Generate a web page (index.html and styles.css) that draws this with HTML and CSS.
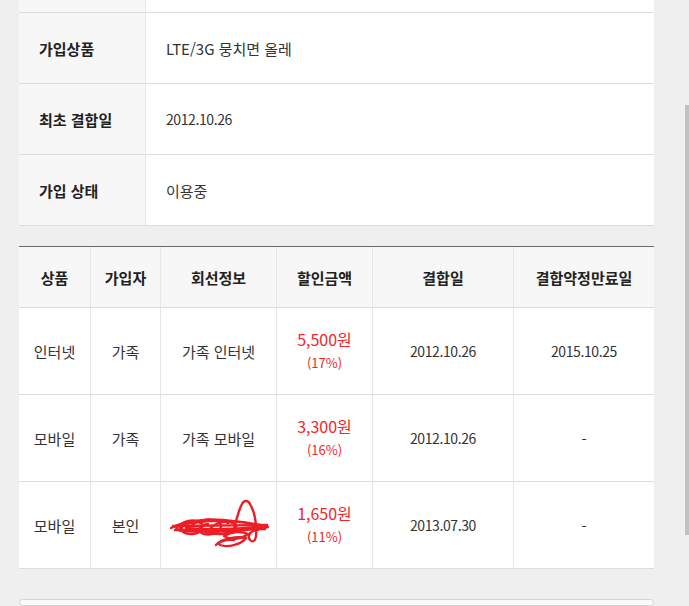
FILE: index.html
```html
<!DOCTYPE html>
<html lang="ko">
<head>
<meta charset="utf-8">
<title>결합 정보</title>
<link rel="stylesheet" href="styles.css">
</head>
<body>
<div class="screen">
  <main class="page">
    <section class="info">
      <div class="info-th info-cut"></div><div class="info-td info-cut"></div>
      <div class="info-th">가입상품</div><div class="info-td">LTE/3G 뭉치면 올레</div>
      <div class="info-th">최초 결합일</div><div class="info-td"><span class="num">2012.10.26</span></div>
      <div class="info-th">가입 상태</div><div class="info-td">이용중</div>
    </section>

    <section class="combo">
      <div class="hd">상품</div>
      <div class="hd">가입자</div>
      <div class="hd">회선정보</div>
      <div class="hd">할인금액</div>
      <div class="hd">결합일</div>
      <div class="hd">결합약정만료일</div>

      <div class="cell">인터넷</div>
      <div class="cell">가족</div>
      <div class="cell">가족 인터넷</div>
      <div class="cell price"><span class="amt">5,500원</span><span class="pct">(17%)</span></div>
      <div class="cell"><span class="num">2012.10.26</span></div>
      <div class="cell"><span class="num">2015.10.25</span></div>

      <div class="cell">모바일</div>
      <div class="cell">가족</div>
      <div class="cell">가족 모바일</div>
      <div class="cell price"><span class="amt">3,300원</span><span class="pct">(16%)</span></div>
      <div class="cell"><span class="num">2012.10.26</span></div>
      <div class="cell">-</div>

      <div class="cell">모바일</div>
      <div class="cell">본인</div>
      <div class="cell">
        <svg class="scribble" width="100" height="52" viewBox="0 0 100 52" fill="none" stroke="#ee1c25" stroke-width="2.4" stroke-linecap="round" stroke-linejoin="round">
          <path d="M1 29 C14 22 40 19 62 22 C80 24 94 26 98 28 C80 31 46 34 14 32 C2 31 4 26 22 24 C44 20 74 22 94 27 C70 30 40 31 16 29"/>
          <path d="M10 31 C8 24 18 20 28 22 C36 24 32 35 22 35 C14 35 10 32 12 28"/>
          <path d="M22 27 C28 19 44 19 50 24 C54 31 44 37 34 35 C26 33 28 26 38 25"/>
          <path d="M40 30 C46 22 60 21 66 26 C68 33 56 37 46 34"/>
          <path d="M30 24 C38 20 52 20 58 24 M36 33 C46 36 56 35 62 32"/>
          <path d="M64 30 C66 22 69 10 72 5 C74 1 78 1 80 5 C84 12 86 20 86 30 C87 40 84 45 80 41 C77 37 80 31 88 31"/>
          <path d="M46 46 C52 39 68 37 76 39 C72 45 58 49 50 46 C46 43 56 40 64 41"/>
          <path d="M54 37 C62 32 72 32 78 35 C70 41 60 41 54 37"/>
          <path d="M3 27 L97 26 M5 31 L95 30"/>
        </svg>
      </div>
      <div class="cell price"><span class="amt">1,650원</span><span class="pct">(11%)</span></div>
      <div class="cell"><span class="num">2013.07.30</span></div>
      <div class="cell">-</div>
    </section>

    <section class="next-box"></section>
  </main>
  <div class="scrollbar"><div class="thumb"></div></div>
</div>
</body>
</html>
```

FILE: styles.css
```css
* { box-sizing: border-box; }

html, body {
  margin: 0;
  padding: 0;
  height: 606px;
  overflow: hidden;
  background: #efefef;
}

body {
  font-family: "Noto Sans CJK KR", "Noto Sans", sans-serif;
  font-size: 15px;
  color: #333;
}

.screen {
  display: flex;
  width: 689px;
  height: 606px;
}

.page {
  width: 684px;
  padding: 0 30px 0 19px;
  display: flex;
  flex-direction: column;
}

.num {
  font-size: 14px;
  letter-spacing: -0.4px;
}

/* info table */
.info {
  display: grid;
  grid-template-columns: 127px 1fr;
  grid-template-rows: 13px 71px 71px 71px;
}

.info-th,
.info-td {
  display: flex;
  align-items: center;
  border-bottom: 1px solid #dcdcdc;
  line-height: 1;
}

.info-th {
  background: #f7f7f7;
  border-right: 1px solid #e6e6e6;
  padding-left: 20px;
  font-weight: 700;
  color: #222;
}

.info-td {
  background: #fff;
  padding-left: 20px;
  color: #333;
}

/* combo table */
.combo {
  margin-top: 20px;
  display: grid;
  grid-template-columns: 71px 70px 116px 96px 141px 141px;
  grid-template-rows: 61px 87px 87px 87px;
  border-top: 1px solid #6a6a6a;
  background: #fff;
}

.hd,
.cell {
  display: flex;
  flex-direction: column;
  align-items: center;
  justify-content: center;
  border-bottom: 1px solid #dcdcdc;
  border-left: 1px solid #e6e6e6;
  text-align: center;
}

.hd:nth-child(6n + 1),
.cell:nth-child(6n + 1) {
  border-left: none;
}

.hd {
  background: #f7f7f7;
  font-weight: 700;
  color: #222;
}

.cell {
  color: #333;
}

.price .amt {
  color: #f2262b;
  font-size: 16px;
  line-height: 22px;
}

.price .pct {
  color: #f2262b;
  font-size: 13px;
  line-height: 22px;
  margin-top: 2px;
}

.scribble {
  display: block;
  margin-left: 2px;
}

.next-box {
  margin-top: 30px;
  height: 60px;
  border: 1px solid #d4d4d4;
  border-radius: 4px;
  background: #fafafa;
}

/* fake scrollbar */
.scrollbar {
  width: 5px;
  padding-left: 1px;
  background: #f0f0f0;
}

.thumb {
  width: 4px;
  height: 430px;
  margin-top: 105px;
  background: #c1c1c1;
}
```
